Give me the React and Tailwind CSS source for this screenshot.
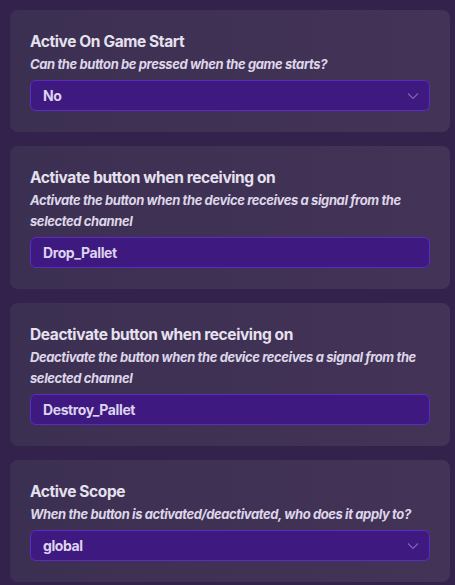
import React from "react";

function Chevron() {
  return (
    <svg width="12" height="8" viewBox="0 0 12 8" fill="none" className="shrink-0">
      <path d="M1 1.5 L6 6.5 L11 1.5" stroke="#7d62b5" strokeWidth="1.2" />
    </svg>
  );
}

function Card({ title, desc, value, select }) {
  return (
    <div className="rounded-lg bg-gradient-to-r from-[#3c3052] to-[#433357] px-5 pt-5 pb-[21px] tracking-[-0.025em]">
      <div className="text-[15.5px] leading-6 font-bold text-[#e6e1ee]">{title}</div>
      <div className="text-[13px] leading-[21px] font-bold italic text-[#ddd6e8]">{desc}</div>
      <div className="mt-[5px] h-[31px] rounded-md border border-[#5b2bc4] bg-[#3e1a80] flex items-center justify-between pl-3 pr-[10px]">
        <span className="text-[14px] font-bold text-[#ddd3ee]">{value}</span>
        {select && <Chevron />}
      </div>
    </div>
  );
}

export default function App() {
  return (
    <div
      className="w-[455px] h-[585px] bg-[#33234c] pl-[10px] pr-[5px] pt-[10px] flex flex-col gap-[14px] overflow-hidden"
      style={{ fontFamily: "Inter, 'Noto Sans', sans-serif" }}
    >
      <Card title="Active On Game Start" desc="Can the button be pressed when the game starts?" value="No" select />
      <Card
        title="Activate button when receiving on"
        desc="Activate the button when the device receives a signal from the selected channel"
        value="Drop_Pallet"
      />
      <Card
        title="Deactivate button when receiving on"
        desc="Deactivate the button when the device receives a signal from the selected channel"
        value="Destroy_Pallet"
      />
      <Card
        title="Active Scope"
        desc="When the button is activated/deactivated, who does it apply to?"
        value="global"
        select
      />
    </div>
  );
}
